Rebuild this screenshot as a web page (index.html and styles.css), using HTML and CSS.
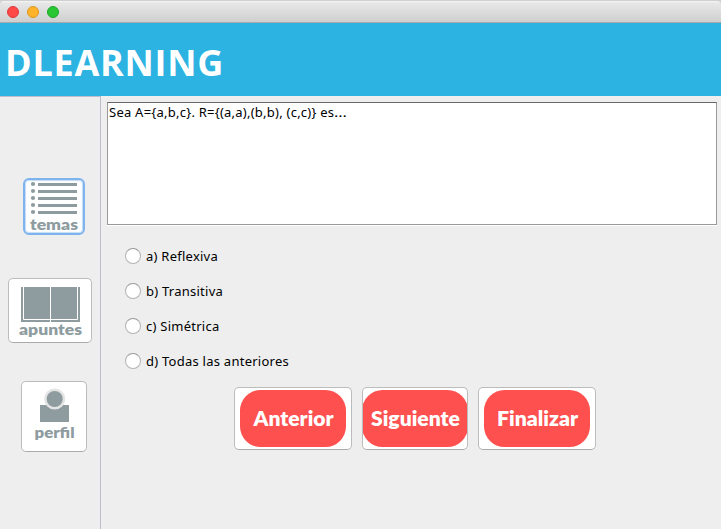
FILE: index.html
```html
<!DOCTYPE html>
<html lang="es">
<head>
<meta charset="utf-8">
<title>DLEARNING</title>
<link rel="stylesheet" href="styles.css">
</head>
<body>
<div class="window">
  <div class="titlebar">
    <span class="light close"></span><span class="light minimize"></span><span class="light maximize"></span>
  </div>
  <header class="banner"><h1>DLEARNING</h1></header>
  <div class="content">
    <nav class="sidebar">
      <button class="btn temas">
        <svg width="56" height="53" viewBox="0 0 56 53" fill="#8e9c9f">
          <g><circle cx="7" cy="4" r="2.1"/><circle cx="7" cy="11" r="2.1"/><circle cx="7" cy="18" r="2.1"/><circle cx="7" cy="25" r="2.1"/><circle cx="7" cy="32" r="2.1"/></g>
          <path d="M12 3h39v3h-39zM12 10h39v3h-39zM12 17h39v3h-39zM12 24h39v3h-39zM12 31h39v3h-39z"/>
          <text class="label" x="4" y="50" textLength="48" lengthAdjust="spacingAndGlyphs">temas</text>
        </svg>
      </button>
      <button class="btn apuntes">
        <svg width="82" height="63" viewBox="0 0 82 63" fill="#8e9c9f">
          <path d="M12 8h59v35H12z"/>
          <path d="M14.5 8v32.5h54V8M41.5 8v35" fill="none" stroke="#fff"/>
          <text class="label" x="10" y="56" textLength="63" lengthAdjust="spacingAndGlyphs">apuntes</text>
        </svg>
      </button>
      <button class="btn perfil">
        <svg width="64" height="69" viewBox="0 0 64 69" fill="#8e9c9f">
          <path d="M18 23h29v17H18z"/>
          <circle cx="32.7" cy="17" r="9.3" stroke="#e4e4e4" stroke-width="2.5"/>
          <text class="label" x="12.5" y="56" textLength="40" lengthAdjust="spacingAndGlyphs">perfil</text>
        </svg>
      </button>
    </nav>
    <main class="quiz">
      <div class="question">Sea A={a,b,c}. R={(a,a),(b,b), (c,c)} es<span class="ellipsis">…</span></div>
      <div class="answers">
        <label><span class="radio"></span><span>a) Reflexiva</span></label>
        <label><span class="radio"></span><span>b) Transitiva</span></label>
        <label><span class="radio"></span><span>c) Simétrica</span></label>
        <label><span class="radio"></span><span>d) Todas las anteriores</span></label>
      </div>
      <div class="actions">
        <button class="btn wide"><svg width="106" height="57"><rect class="pill" width="106" height="57" rx="20.5"/><text class="action" x="13.5" y="36" textLength="80" lengthAdjust="spacingAndGlyphs">Anterior</text></svg></button>
        <button class="btn tight"><svg width="106" height="57"><rect class="pill" width="106" height="57" rx="20.5"/><text class="action" x="9" y="36" textLength="89" lengthAdjust="spacingAndGlyphs">Siguiente</text></svg></button>
        <button class="btn wide"><svg width="106" height="57"><rect class="pill" width="106" height="57" rx="20.5"/><text class="action" x="13" y="36" textLength="81" lengthAdjust="spacingAndGlyphs">Finalizar</text></svg></button>
      </div>
    </main>
  </div>
</div>
</body>
</html>
```
FILE: styles.css
```css
* { box-sizing: border-box; }
body {
  margin: 0;
  background: #eee;
  color: #000;
  font: 13px/16px "Noto Sans", "Open Sans", sans-serif;
  overflow: hidden;
}
.window { width: 721px; height: 529px; display: flex; flex-direction: column; background: linear-gradient(#d0d0d0 8px, #eee 8px); }
.titlebar {
  height: 22px;
  margin-top: 1px;
  flex: none;
  display: flex;
  gap: 8px;
  padding: 5px 7px 0;
  border-bottom: 1px solid #a9a9a9;
  border-radius: 4px 4px 0 0;
  background: linear-gradient(#f4f4f4 0, #e7e7e7 2px, #cfcfcf 100%);
}
.light { width: 12px; height: 12px; border-radius: 50%; border: 1px solid; }
.close { background: #ff4848; border-color: #df3a3b; }
.minimize { background: #ffb32a; border-color: #dd981f; }
.maximize { background: #28c732; border-color: #1fa62a; }
.banner { height: 73px; flex: none; padding: 15px 0 0 5px; background: #2cb3e1; }
h1 {
  margin: 0;
  color: #fff;
  font: 700 36px/50px "Open Sans", "Noto Sans", sans-serif;
  letter-spacing: .75px;
}
.content { flex: 1; display: flex; }
.sidebar { width: 101px; flex: none; border-top: 1px solid #bdbdd0; border-right: 1px solid #bdbdd0; padding-top: 81px; }
.btn {
  display: flex;
  align-items: center;
  justify-content: center;
  padding: 0;
  background: #fff;
  border: 1px solid #bcbcbc;
  border-bottom-color: #aaa;
  border-radius: 5px;
}
.btn svg { display: block; flex: none; }
.temas { width: 62px; height: 57px; margin-left: 23px; border: 2px solid #7fb3ee; border-radius: 6px; box-shadow: inset 0 0 1px 1px #c3dcf8; }
.apuntes { width: 84px; height: 65px; margin: 43px 0 0 8px; }
.perfil { width: 66px; height: 71px; margin: 38px 0 0 21px; }
.label { font: 800 15.5px "Lato", sans-serif; }
.quiz { flex: 1; padding: 6px 4px 0 6px; }
.question {
  height: 123px;
  padding: 1px;
  background: #fff;
  border: 1px solid #999;
  border-top-color: #686868;
  box-shadow: 0 1px #fff;
  letter-spacing: .24px;
}
.ellipsis { display: inline-block; transform: scaleX(1.25); transform-origin: left; }
.answers { display: flex; flex-direction: column; gap: 19px; padding: 23px 0 0 18px; letter-spacing: .25px; }
.answers label { display: flex; align-items: center; gap: 5px; height: 16px; }
.radio { width: 16px; height: 16px; border: 1px solid #b3b3b3; border-top-color: #999; border-radius: 50%; background: #fff; }
.actions { display: flex; gap: 10px; padding: 18px 0 0 127px; }
.actions .btn { height: 63px; overflow: hidden; }
.wide { width: 118px; }
.tight { width: 106px; }
.pill { fill: #ff5050; }
.action { fill: #fff; font: 800 20px "Lato", sans-serif; }
```
